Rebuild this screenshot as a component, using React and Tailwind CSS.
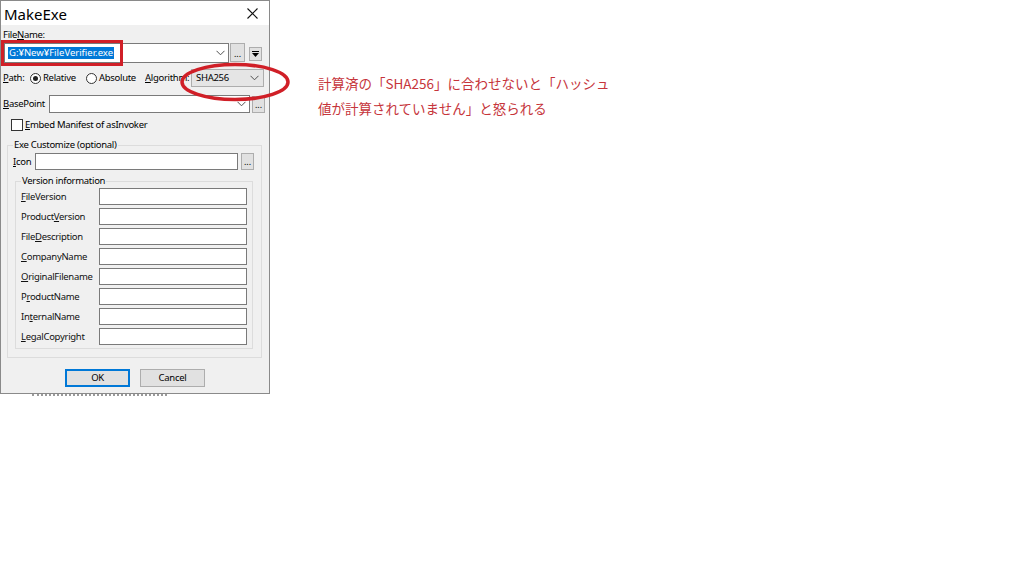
import React from "react";

const F = { fontFamily: '"Noto Sans", "Open Sans", sans-serif' };

function Chevron() {
  return (
    <svg width="9" height="6" viewBox="0 0 9 6" className="shrink-0">
      <polyline points="0.5,0.8 4.5,4.8 8.5,0.8" fill="none" stroke="#505050" strokeWidth="1" />
    </svg>
  );
}

function Dots({ cls }) {
  return (
    <div className={"flex items-end justify-center bg-[#e1e1e1] border border-[#adadad] text-[9px] leading-[10px] pb-[2px] text-black tracking-normal " + cls}>
      ...
    </div>
  );
}

function Radio({ on }) {
  return (
    <div className="w-[11px] h-[11px] rounded-full border border-[#333] bg-white flex items-center justify-center shrink-0">
      {on && <div className="w-[5px] h-[5px] rounded-full bg-[#222]" />}
    </div>
  );
}

function U({ children }) {
  return <span className="underline underline-offset-[1px] decoration-[1px]">{children}</span>;
}

function Row({ label }) {
  return (
    <div className="flex items-center h-[17px] mb-[3px]">
      <div className="w-[83px] pl-[5px] text-[9.5px] leading-[17px] text-[#111] whitespace-nowrap">{label}</div>
      <div className="w-[148px] h-[17px] bg-white border border-[#7a7a7a]" />
    </div>
  );
}

export default function App() {
  return (
    <div className="relative w-[1024px] h-[576px] bg-white overflow-hidden text-black" style={F}>
      <div className="flex">
        <div className="flex flex-col">
          <div className="w-[270px] h-[394px] border border-[#8a8a8a] bg-[#f0f0f0] flex flex-col tracking-[-0.3px]">
            {/* title bar */}
            <div className="h-[24px] bg-white flex items-center justify-between tracking-normal">
              <span className="ml-[3px] text-[15px] leading-[20px] mt-[1px]">MakeExe</span>
              <svg width="11" height="11" viewBox="0 0 11 11" className="mr-[11px] mt-[1px]">
                <path d="M0.5 0.5 L10.5 10.5 M10.5 0.5 L0.5 10.5" stroke="#111" strokeWidth="1.1" />
              </svg>
            </div>
            {/* FileName label */}
            <div className="mt-[3px] h-[14px] ml-[2px] text-[9.5px] leading-[14px]">
              File<U>N</U>ame:
            </div>
            {/* row 1 */}
            <div className="mt-[1px] h-[20px] flex">
              <div className="ml-[3px] w-[225px] h-[20px] bg-white border border-[#7a7a7a] flex items-center justify-between">
                <span className="ml-[3px] bg-[#0078d7] text-white text-[9.5px] leading-[12px] px-[1px] tracking-normal">G:¥New¥FileVerifier.exe</span>
                <div className="mr-[3px]"><Chevron /></div>
              </div>
              <Dots cls="ml-[1px] w-[15px] h-[19px]" />
              <div className="ml-[4px] mt-[4px] w-[13px] h-[14px] bg-[#e1e1e1] border border-[#adadad] flex flex-col items-center justify-center gap-[1px]">
                <div className="w-[7px] h-[1px] bg-black" />
                <svg width="7" height="4" viewBox="0 0 7 4"><polygon points="0,0 7,0 3.5,4" fill="#000" /></svg>
              </div>
            </div>
            {/* row 2 */}
            <div className="mt-[6px] h-[18px] flex items-center text-[9.5px] leading-[12px]">
              <span className="ml-[2px] w-[27px]"><U>P</U>ath:</span>
              <Radio on />
              <span className="ml-[2px] w-[43px]">Relative</span>
              <Radio />
              <span className="ml-[2px] w-[46px]">Absolute</span>
              <span className="w-[46px] whitespace-nowrap overflow-hidden"><U>A</U>lgorithm:</span>
              <div className="w-[73px] h-[18px] bg-[#e5e5e5] border border-[#adadad] flex items-center justify-between">
                <span className="ml-[4px]">SHA256</span>
                <div className="mr-[4px]"><Chevron /></div>
              </div>
            </div>
            {/* row 3 */}
            <div className="mt-[8px] h-[18px] flex items-center text-[9.5px] leading-[12px]">
              <span className="ml-[2px] w-[46px]"><U>B</U>asePoint</span>
              <div className="w-[201px] h-[18px] bg-white border border-[#7a7a7a] flex items-center justify-end">
                <div className="mr-[3px]"><Chevron /></div>
              </div>
              <Dots cls="ml-[2px] w-[13px] h-[17px]" />
            </div>
            {/* checkbox */}
            <div className="mt-[6px] h-[12px] flex items-center text-[9.5px] leading-[12px]">
              <div className="ml-[10px] w-[12px] h-[12px] bg-white border border-[#333]" />
              <span className="ml-[2px]"><U>E</U>mbed Manifest of asInvoker</span>
            </div>
            {/* outer group */}
            <div className="relative mt-[14px] ml-[6px] w-[255px] h-[213px] border border-[#dcdcdc] flex flex-col">
              <span className="absolute left-[5px] top-[-8px] bg-[#f0f0f0] px-[1px] text-[9.5px] leading-[13px] whitespace-nowrap">Exe Customize (optional)</span>
              <div className="mt-[7px] h-[17px] flex items-center text-[9.5px] leading-[12px]">
                <span className="ml-[5px] w-[22px]"><U>I</U>con</span>
                <div className="w-[203px] h-[17px] bg-white border border-[#7a7a7a]" />
                <Dots cls="ml-[3px] w-[13px] h-[17px]" />
              </div>
              {/* inner group */}
              <div className="relative mt-[11px] ml-[7px] w-[238px] h-[168px] border border-[#dcdcdc] flex flex-col">
                <span className="absolute left-[5px] top-[-8px] bg-[#f0f0f0] px-[1px] text-[9.5px] leading-[13px] whitespace-nowrap">Version information</span>
                <div className="mt-[6px] flex flex-col">
                  <Row label={<><U>F</U>ileVersion</>} />
                  <Row label={<>Product<U>V</U>ersion</>} />
                  <Row label={<>File<U>D</U>escription</>} />
                  <Row label={<><U>C</U>ompanyName</>} />
                  <Row label={<><U>O</U>riginalFilename</>} />
                  <Row label={<>P<U>r</U>oductName</>} />
                  <Row label={<>In<U>t</U>ernalName</>} />
                  <Row label={<><U>L</U>egalCopyright</>} />
                </div>
              </div>
            </div>
            {/* buttons */}
            <div className="mt-[11px] flex justify-center gap-[10px] text-[9.5px]">
              <div className="w-[65px] h-[18px] bg-[#e1e1e1] border-2 border-[#0078d7] flex items-center justify-center">OK</div>
              <div className="w-[65px] h-[18px] bg-[#e1e1e1] border border-[#adadad] flex items-center justify-center">Cancel</div>
            </div>
          </div>
          <div className="ml-[32px] w-[135px] h-[3px] border-t-[2px] border-dotted border-[#9a9a9a]" />
        </div>
        {/* annotation */}
        <div className="ml-[48px] mt-[71px] text-[13.5px] leading-[25px] text-[#c6353b]" style={{ fontFamily: '"Noto Sans CJK JP", "Noto Sans", sans-serif' }}>
          <div>計算済の「SHA256」に合わせないと「ハッシュ</div>
          <div>値が計算されていません」と怒られる</div>
        </div>
      </div>

      {/* red overlays */}
      <div className="absolute left-[1px] top-[40px] w-[122px] h-[26px] border-[3px] border-[#d01f27]" />
      <svg className="absolute left-[178px] top-[61px]" width="114" height="42" viewBox="0 0 114 42">
        <ellipse cx="57" cy="21" rx="53" ry="17.5" fill="none" stroke="#d01f27" strokeWidth="3.5" />
      </svg>
    </div>
  );
}
